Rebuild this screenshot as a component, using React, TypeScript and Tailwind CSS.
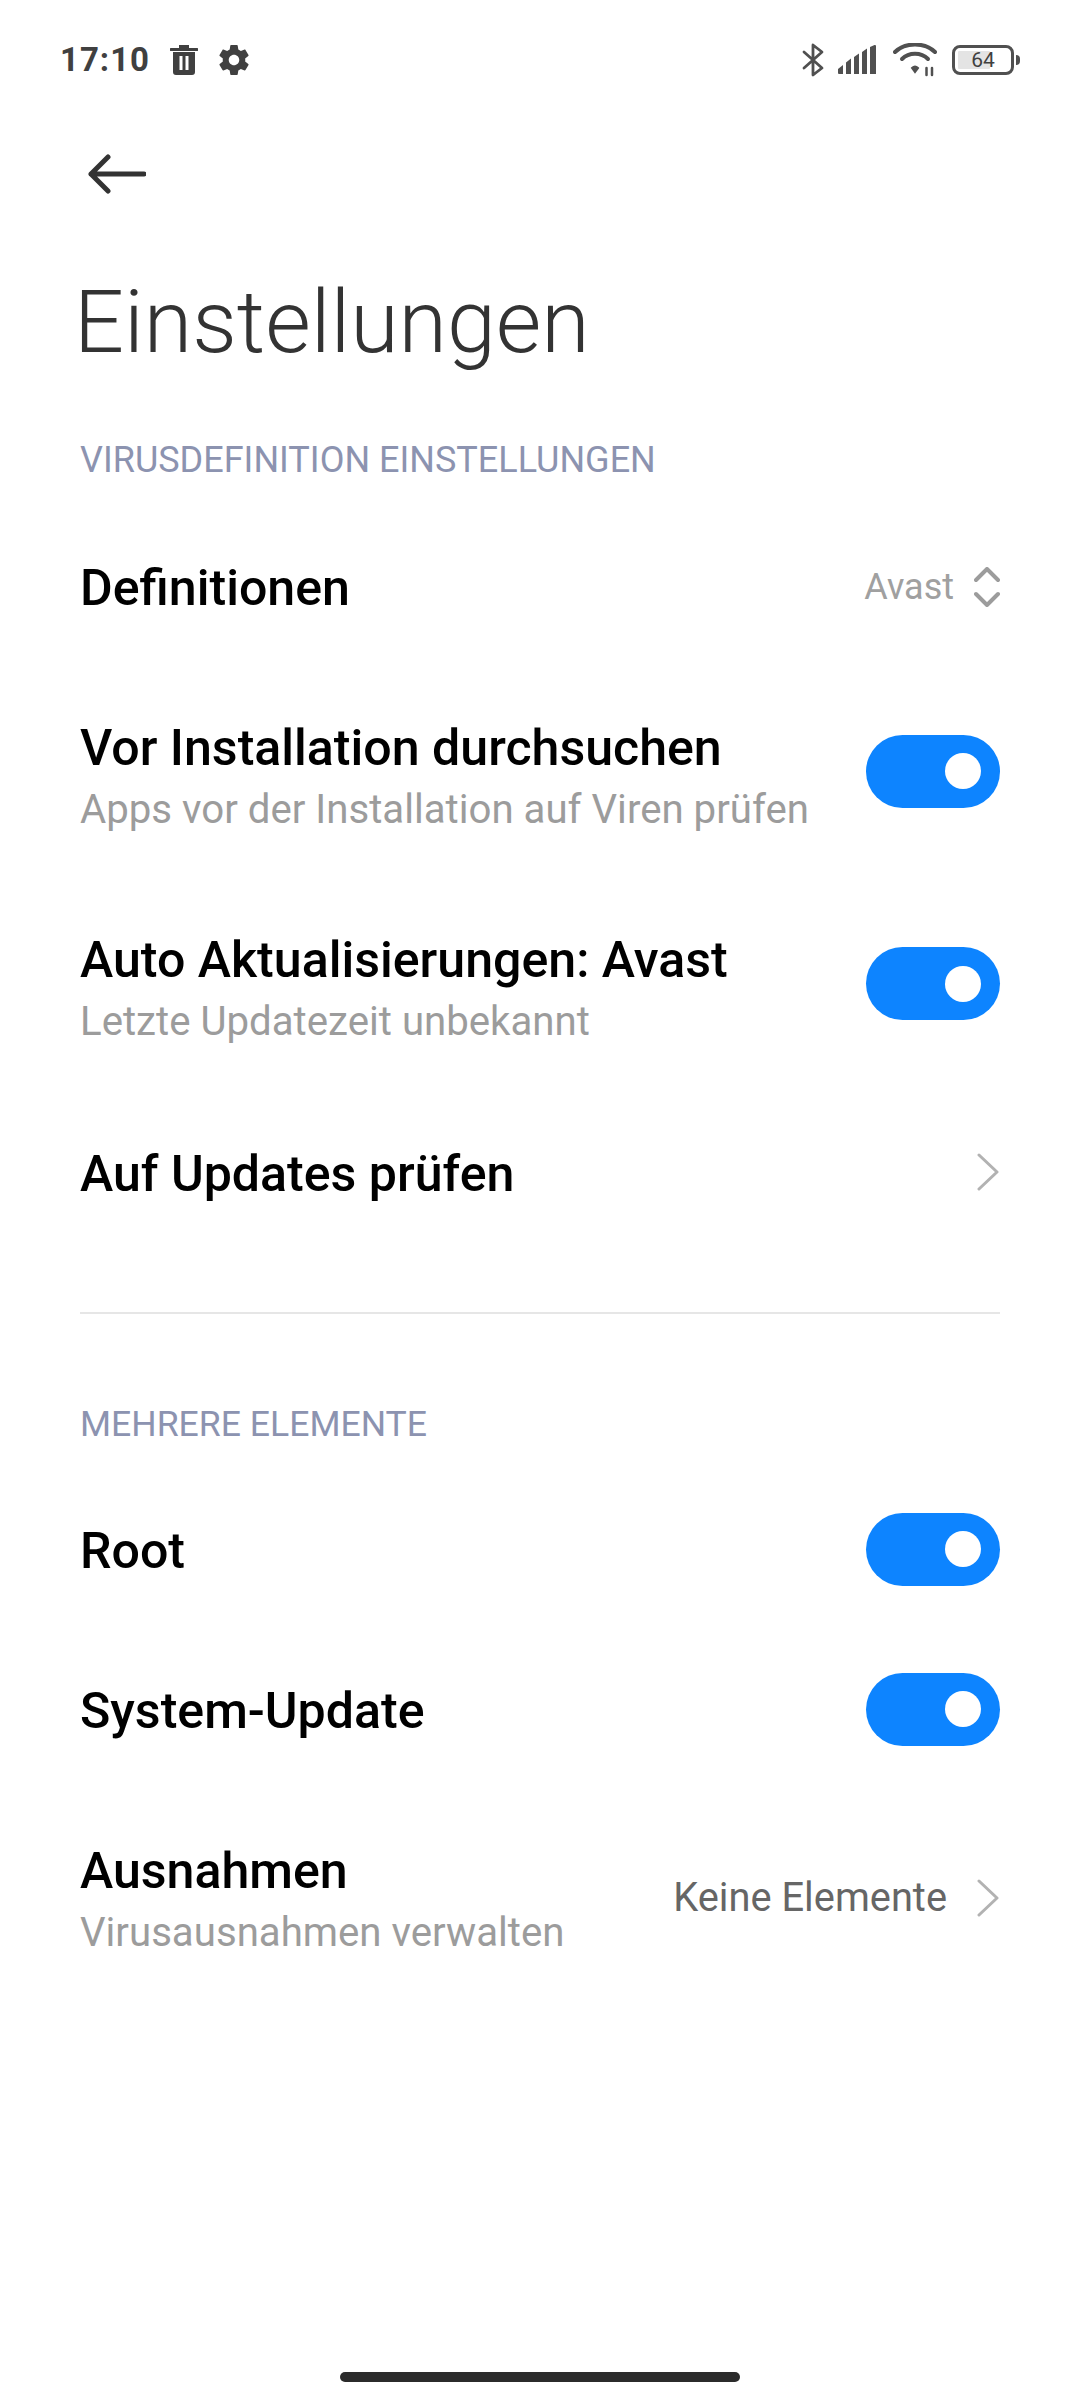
import { ReactNode } from 'react'

const font = { fontFamily: 'Roboto, sans-serif' }

function Toggle() {
  return (
    <div className="flex h-[73px] w-[134px] shrink-0 items-center justify-end rounded-full bg-[#0d84ff] pr-[19px]">
      <div className="h-[36px] w-[36px] rounded-full bg-white" />
    </div>
  )
}

function Chevron({ className }: { className?: string }) {
  return (
    <svg viewBox="0 0 24 38" className={className} fill="none" stroke="#b2b2b2" strokeWidth="3" strokeLinecap="round" strokeLinejoin="round">
      <path d="M3 2 L21 19 L3 36" />
    </svg>
  )
}

function StatusBar() {
  return (
    <div className="flex h-[120px] items-center justify-between pl-[60px] pr-[60px] text-[#404040]">
      <div className="flex items-center">
        <span className="text-[33px] font-bold tracking-[1px]">17:10</span>
        <svg viewBox="0 0 28 30" className="ml-[20px] h-[30px] w-[28px]" fill="#404040">
          <path d="M9 0h10v3h8a1 1 0 0 1 0 3H1a1 1 0 0 1 0-3h8zM3 7h22v20a3 3 0 0 1-3 3H6a3 3 0 0 1-3-3zM9.500 11v14h3V11zM15.500 11v14h3V11z" fillRule="evenodd" />
        </svg>
        <svg viewBox="0 0 24 24" className="ml-[18px] h-[36px] w-[36px]" fill="#404040">
          <path d="M19.430 12.980c.04-.32.070-.64.070-.98s-.03-.66-.07-.98l2.110-1.650c.19-.15.240-.42.120-.64l-2-3.460c-.12-.22-.39-.30-.61-.22l-2.490 1c-.52-.40-1.080-.73-1.690-.98l-.38-2.650C14.460 2.180 14.250 2 14 2h-4c-.25 0-.46.180-.49.420l-.38 2.650c-.61.25-1.170.59-1.690.98l-2.490-1c-.23-.09-.49 0-.61.220l-2 3.460c-.13.220-.07.490.12.640l2.110 1.650c-.04.320-.07.650-.07.980s.03.660.07.980l-2.110 1.650c-.19.150-.24.420-.12.640l2 3.460c.12.220.39.300.61.220l2.490-1c.52.400 1.080.730 1.690.980l.38 2.650c.03.240.24.420.49.420h4c.25 0 .46-.18.49-.42l.38-2.650c.61-.25 1.170-.59 1.690-.98l2.490 1c.23.090.49 0 .61-.22l2-3.460c.12-.22.070-.49-.12-.64l-2.110-1.650zM12 15.500c-1.930 0-3.500-1.570-3.500-3.500s1.570-3.500 3.500-3.500 3.500 1.570 3.500 3.500-1.570 3.500-3.500 3.500z" />
        </svg>
      </div>
      <div className="flex items-center">
        <svg viewBox="0 0 22 34" className="h-[34px] w-[22px]" fill="none" stroke="#505050" strokeWidth="2.800" strokeLinecap="round" strokeLinejoin="round">
          <path d="M2 9 L20 25 L11 32 V2 L20 9 L2 25" />
        </svg>
        <svg viewBox="0 0 40 30" className="ml-[14px] h-[30px] w-[40px]" fill="#505050">
          <path d="M0 24l5-4v9H1a1 1 0 0 1-1-1zM8 17.500l5-4V29H8zM16 12l5-3.500V29h-5zM24 7l5-3.500V29h-5zM32 2l4.500-2H37a1 1 0 0 1 1 1v28h-6z" />
        </svg>
        <svg viewBox="0 0 44 34" className="ml-[15px] h-[34px] w-[44px]" fill="none" stroke="#505050" strokeLinecap="round">
          <path d="M2 9 C12 -1 32 -1 42 9" strokeWidth="4" />
          <path d="M9 16 C16 9 28 9 35 16" strokeWidth="4" />
          <path d="M19 25 L22 29 L25 25 C23 23 21 23 19 25Z" fill="#505050" strokeWidth="2" />
          <path d="M33.500 25v7M39 25v7" strokeWidth="2.500" />
        </svg>
        <div className="relative ml-[15px] flex h-[30px] w-[62px] items-center rounded-[8px] border-[3px] border-[#505050] p-[3px]">
          <div className="h-full w-[64%] rounded-[1px] bg-[#e4e4e4]" />
          <span className="absolute inset-0 flex items-center justify-center text-[21px] leading-none text-[#404040]">64</span>
        </div>
        <div className="ml-[2px] h-[10px] w-[4px] rounded-r-full bg-[#505050]" />
      </div>
    </div>
  )
}

function Row({ title, sub, h, pt, children }: { title: string; sub?: string; h: string; pt: string; children?: ReactNode }) {
  return (
    <div className={`flex items-center justify-between px-[80px] ${h}`}>
      <div className={`flex flex-col ${pt}`}>
        <div className="text-[50.100px] leading-[61px] font-medium text-black">{title}</div>
        {sub && <div className="text-[40.200px] leading-[61px] text-[#9c9c9c]">{sub}</div>}
      </div>
      {children}
    </div>
  )
}

export default function App() {
  return (
    <div className="flex h-[2400px] w-[1080px] flex-col bg-white" style={font}>
      <StatusBar />
      <div className="pl-[88px] pt-[34px]">
        <svg viewBox="0 0 58 40" className="h-[40px] w-[58px]" fill="none" stroke="#333333" strokeWidth="5" strokeLinecap="round" strokeLinejoin="round">
          <path d="M56 20 H3 M20 3 L3 20 L20 37" />
        </svg>
      </div>
      <div className="mt-[73px] pl-[74px] text-[88px] leading-[110px] font-light text-[#333333]">Einstellungen</div>
      <div className="mt-[61px] pl-[80px] text-[36px] leading-[44px] text-[#8c93b0]">VIRUSDEFINITION EINSTELLUNGEN</div>
      <div className="mt-[26px]">
        <Row title="Definitionen" h="h-[157px]" pt="pt-[4px]">
          <div className="flex items-center">
            <span className="text-[36px] text-[#a0a0a0]">Avast</span>
            <svg viewBox="0 0 26 40" className="ml-[20px] h-[40px] w-[26px]" fill="none" stroke="#9c9c9c" strokeWidth="4" strokeLinecap="round" strokeLinejoin="round">
              <path d="M2 13 L13 2 L24 13 M2 27 L13 38 L24 27" />
            </svg>
          </div>
        </Row>
        <Row title="Vor Installation durchsuchen" sub="Apps vor der Installation auf Viren prüfen" h="h-[212px]" pt="pt-[15px]">
          <Toggle />
        </Row>
        <Row title="Auto Aktualisierungen: Avast" sub="Letzte Updatezeit unbekannt" h="h-[213px]" pt="pt-[15px]">
          <Toggle />
        </Row>
        <Row title="Auf Updates prüfen" h="h-[164px]" pt="pt-[4px]">
          <Chevron className="h-[38px] w-[24px]" />
        </Row>
      </div>
      <div className="mx-[80px] mt-[58px] h-[2px] bg-[#e6e6e6]" />
      <div className="mt-[88px] pl-[80px] text-[35.600px] leading-[44px] text-[#8c93b0]">MEHRERE ELEMENTE</div>
      <div className="mt-[23px]">
        <Row title="Root" h="h-[160px]" pt="pt-[4px]"><Toggle /></Row>
        <Row title="System-Update" h="h-[160px]" pt="pt-[4px]"><Toggle /></Row>
        <Row title="Ausnahmen" sub="Virusausnahmen verwalten" h="h-[218px]" pt="pt-[8px]">
          <div className="flex items-center">
            <span className="text-[39.800px] text-[#666666]">Keine Elemente</span>
            <Chevron className="ml-[29px] h-[38px] w-[24px]" />
          </div>
        </Row>
      </div>
      <div className="mt-auto flex justify-center pb-[18px]">
        <div className="h-[10px] w-[400px] rounded-full bg-[#2b2b2b]" />
      </div>
    </div>
  )
}
